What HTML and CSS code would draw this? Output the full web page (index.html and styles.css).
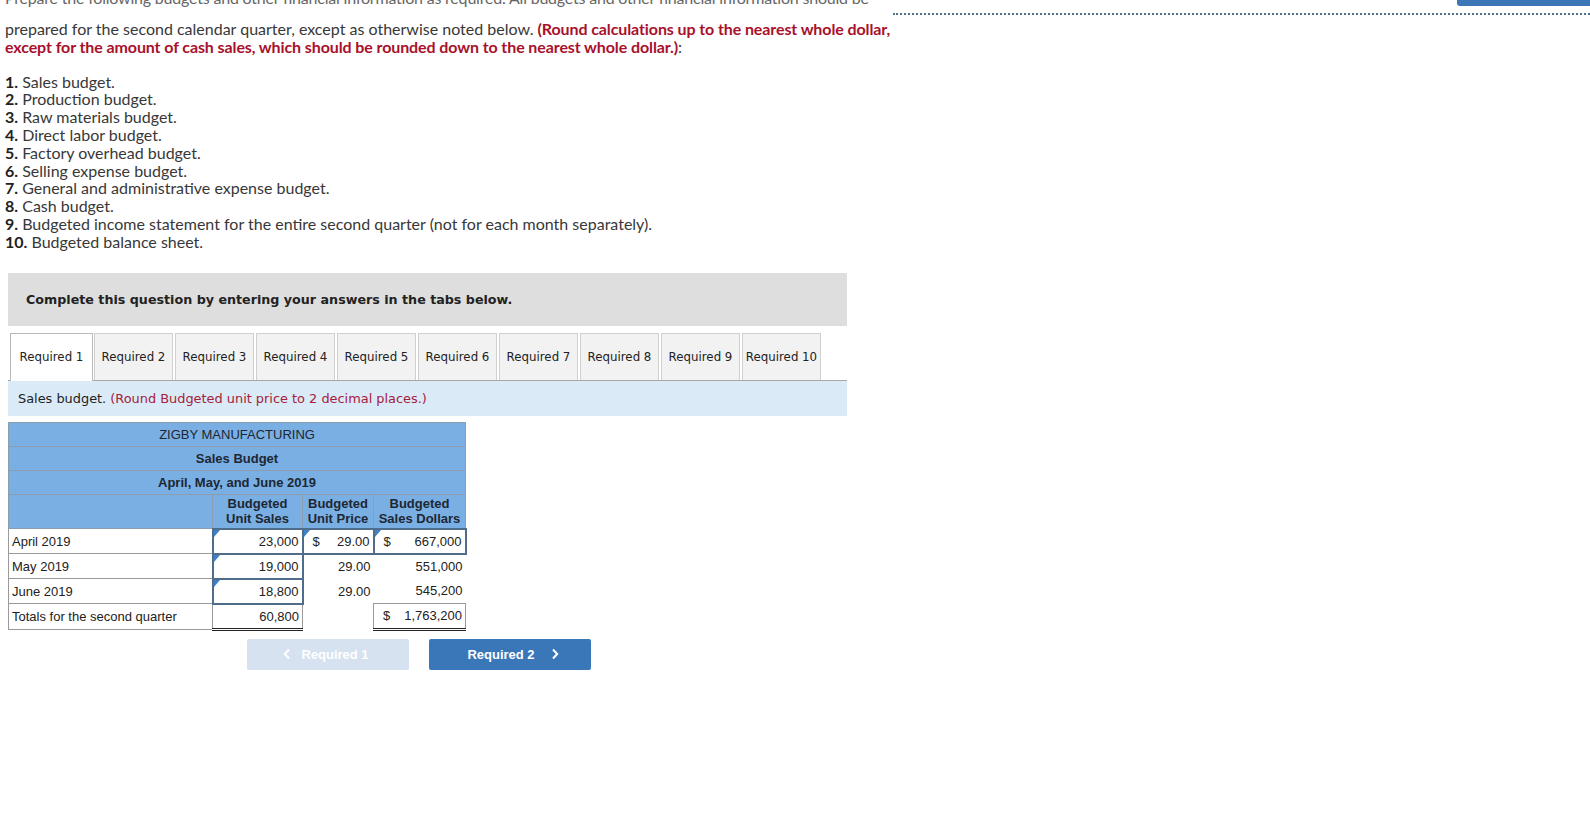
FILE: index.html
```html
<!DOCTYPE html>
<html>
<head>
<meta charset="utf-8">
<link rel="stylesheet" href="styles.css">
</head>
<body>
<div class="topbar-line"></div>
<div class="topbar-btn"></div>

<div class="intro">
  <div class="clip"><p class="clip-text">Prepare the following budgets and other financial information as required. All budgets and other financial information should be</p></div>
  <p class="lead">prepared for the second calendar quarter, except as otherwise noted below. <strong class="red">(Round calculations up to the nearest whole dollar, except for the amount of cash sales, which should be rounded down to the nearest whole dollar.)</strong>:</p>
  <ol class="reqs">
    <li><b>1.</b> Sales budget.</li>
    <li><b>2.</b> Production budget.</li>
    <li><b>3.</b> Raw materials budget.</li>
    <li><b>4.</b> Direct labor budget.</li>
    <li><b>5.</b> Factory overhead budget.</li>
    <li><b>6.</b> Selling expense budget.</li>
    <li><b>7.</b> General and administrative expense budget.</li>
    <li><b>8.</b> Cash budget.</li>
    <li><b>9.</b> Budgeted income statement for the entire second quarter (not for each month separately).</li>
    <li><b>10.</b> Budgeted balance sheet.</li>
  </ol>
</div>

<div class="panel">
  <div class="complete">Complete this question by entering your answers in the tabs below.</div>

  <div class="tabs">
    <div class="tab active">Required 1</div>
    <div class="tab">Required 2</div>
    <div class="tab">Required 3</div>
    <div class="tab">Required 4</div>
    <div class="tab">Required 5</div>
    <div class="tab">Required 6</div>
    <div class="tab">Required 7</div>
    <div class="tab">Required 8</div>
    <div class="tab">Required 9</div>
    <div class="tab">Required 10</div>
  </div>

  <div class="instr">Sales budget. <span class="instr-red">(Round Budgeted unit price to 2 decimal places.)</span></div>

  <table class="budget">
    <colgroup>
      <col class="c1"><col class="c2"><col class="c3"><col class="c4">
    </colgroup>
    <tr class="hrow"><td colspan="4" class="title">ZIGBY MANUFACTURING</td></tr>
    <tr class="hrow"><td colspan="4" class="title b">Sales Budget</td></tr>
    <tr class="hrow"><td colspan="4" class="title b">April, May, and June 2019</td></tr>
    <tr class="colhead">
      <td></td>
      <td>Budgeted<br>Unit Sales</td>
      <td>Budgeted<br>Unit Price</td>
      <td>Budgeted<br>Sales Dollars</td>
    </tr>
    <tr class="brow">
      <td class="label">April 2019</td>
      <td class="inp"><span class="tri"></span><span class="num">23,000</span></td>
      <td class="inp"><span class="tri"></span><span class="cur">$</span><span class="num">29.00</span></td>
      <td class="inp"><span class="tri"></span><span class="cur">$</span><span class="num">667,000</span></td>
    </tr>
    <tr class="brow">
      <td class="label">May 2019</td>
      <td class="inp"><span class="tri"></span><span class="num">19,000</span></td>
      <td class="plain"><span class="num">29.00</span></td>
      <td class="plain"><span class="num">551,000</span></td>
    </tr>
    <tr class="brow">
      <td class="label">June 2019</td>
      <td class="inp"><span class="tri"></span><span class="num">18,800</span></td>
      <td class="plain"><span class="num">29.00</span></td>
      <td class="plain"><span class="num">545,200</span></td>
    </tr>
    <tr class="brow">
      <td class="label">Totals for the second quarter</td>
      <td class="total"><span class="num">60,800</span></td>
      <td class="plain"></td>
      <td class="total"><span class="cur">$</span><span class="num">1,763,200</span></td>
    </tr>
  </table>

  <div class="nav">
    <div class="navbtn prev">
      <svg width="8" height="12" viewBox="0 0 8 12"><polyline points="6,1.5 1.8,6 6,10.5" fill="none" stroke="#fff" stroke-width="2"/></svg>
      <span>Required 1</span>
    </div>
    <div class="navbtn next">
      <span>Required 2</span>
      <svg width="8" height="12" viewBox="0 0 8 12"><polyline points="2,1.5 6.2,6 2,10.5" fill="none" stroke="#fff" stroke-width="2"/></svg>
    </div>
  </div>
</div>
</body>
</html>
```

FILE: styles.css
```css
html, body {
  margin: 0;
  padding: 0;
  background: #fff;
}
body {
  position: relative;
  width: 1590px;
  height: 818px;
  overflow: hidden;
}
.topbar-line {
  position: absolute;
  left: 893px;
  right: 0;
  top: 13px;
  border-top: 2px dotted #4f7089;
}
.topbar-btn {
  position: absolute;
  left: 1457px;
  right: 0;
  top: 0;
  height: 6px;
  background: #3b76b7;
  border-bottom-left-radius: 3px;
}
.intro {
  font-family: Lato, "Open Sans", sans-serif;
  font-size: 16px;
  line-height: 17.8px;
  color: #383838;
  padding-left: 5px;
}
.clip {
  height: 8px;
  overflow: hidden;
}
.clip-text {
  margin: -11px 0 0 0;
  white-space: nowrap;
  letter-spacing: -0.2px;
  color: #666;
}
.lead {
  margin: 12px 0 0 0;
  width: 905px;
}
.red {
  color: #a8112c;
  font-weight: bold;
  letter-spacing: -0.1px;
}
.reqs {
  list-style: none;
  margin: 17px 0 0 0;
  padding: 0;
}
.reqs b {
  font-weight: bold;
  color: #222;
}
.panel {
  margin-left: 8px;
  margin-top: 22px;
  width: 839px;
}
.complete {
  background: #dedede;
  height: 53px;
  box-sizing: border-box;
  padding-left: 18px;
  display: flex;
  align-items: center;
  font-family: "DejaVu Sans", Verdana, sans-serif;
  font-weight: bold;
  font-size: 12.7px;
  color: #222;
}
.tabs {
  display: flex;
  margin-top: 7px;
  padding-left: 2px;
  border-bottom: 1px solid #a8a8a8;
  height: 47px;
}
.tab {
  width: 79px;
  height: 47px;
  box-sizing: border-box;
  margin-right: 2px;
  background: #f2f2f2;
  border: 1px solid #cfcfcf;
  border-bottom: none;
  display: flex;
  align-items: center;
  justify-content: center;
  font-family: "DejaVu Sans", Verdana, sans-serif;
  font-size: 11.8px;
  color: #222;
  white-space: nowrap;
}
.tab.active {
  width: 83px;
  margin-right: 1px;
  background: #fff;
  border-color: #b8b8b8;
  height: 48px;
}
.instr {
  background: #dbeaf7;
  height: 35px;
  box-sizing: border-box;
  padding-left: 10px;
  display: flex;
  align-items: center;
  font-family: "DejaVu Sans", Verdana, sans-serif;
  font-size: 12.9px;
  color: #222;
  white-space: pre;
}
.instr-red {
  color: #a3213b;
}
.budget {
  margin-top: 6px;
  border-collapse: collapse;
  table-layout: fixed;
  width: 457px;
  font-family: "Liberation Sans", Arial, sans-serif;
  font-size: 13px;
  color: #222;
}
.c1 { width: 204px; }
.c2 { width: 90px; }
.c3 { width: 71px; }
.c4 { width: 92px; }
.budget td {
  padding: 0;
}
.hrow td {
  background: #7aafe3;
  border: 1px solid #8d9db0;
  height: 23px;
  text-align: center;
  color: #1d2733;
}
.hrow .b {
  font-weight: bold;
}
.colhead td {
  background: #7aafe3;
  border: 1px solid #8d9db0;
  height: 33px;
  text-align: center;
  font-weight: bold;
  line-height: 15px;
  color: #1d2733;
}
.brow td {
  height: 23px;
  position: relative;
}
.brow .label {
  border: 1px solid #9a9a9a;
  padding-left: 3px;
}
.inp {
  border: 2px solid #4f6c8a;
}
.plain {
  border: none;
}
.total {
  border: 1px solid #9a9a9a;
  border-bottom: 3px double #222;
}
.brow td .num {
  float: right;
  padding-right: 3px;
}
.brow td .cur {
  float: left;
  padding-left: 9px;
}
.tri {
  position: absolute;
  left: 0;
  top: 0;
  width: 0;
  height: 0;
  border-top: 7px solid #3f80c8;
  border-right: 6px solid transparent;
}
.nav {
  display: flex;
  gap: 20px;
  margin-top: 8px;
  padding-left: 239px;
}
.navbtn {
  width: 162px;
  height: 31px;
  border-radius: 2px;
  display: flex;
  align-items: center;
  justify-content: center;
  box-sizing: border-box;
  font-family: "Liberation Sans", Arial, sans-serif;
  font-weight: bold;
  font-size: 13px;
  color: #fff;
}
.navbtn.prev {
  background: #d6e2f0;
  gap: 10px;
  padding-right: 4px;
}
.navbtn.next {
  background: #3a77b9;
  gap: 16px;
  padding-left: 6px;
}
```
